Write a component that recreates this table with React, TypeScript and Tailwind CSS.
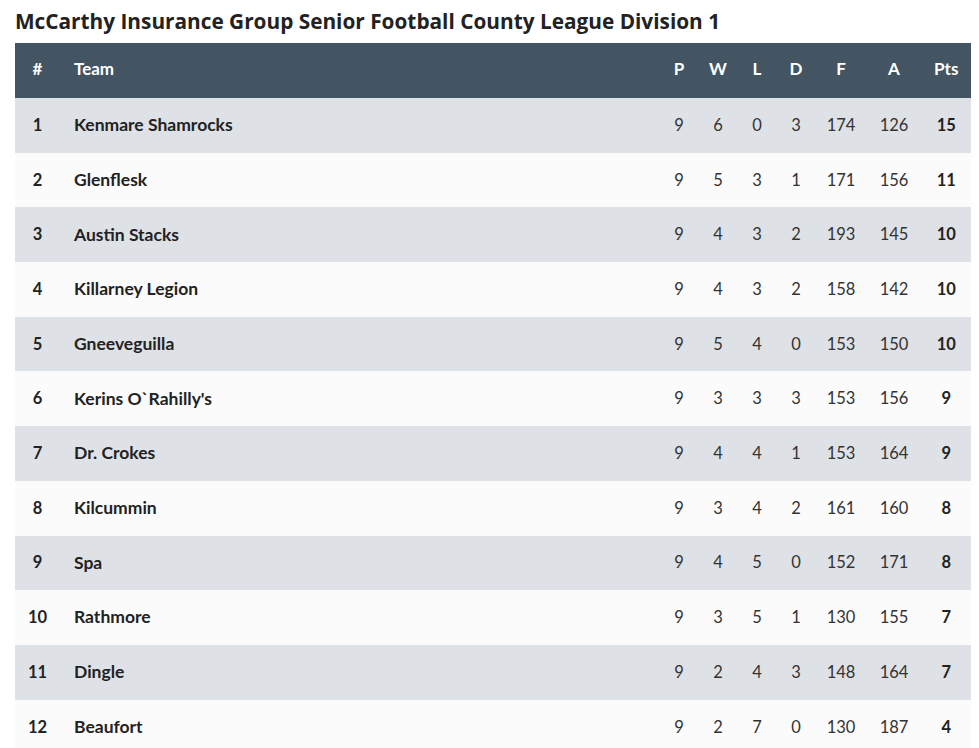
import React from "react";

const rows: [number, string, number, number, number, number, number, number, number][] = [
  [1, "Kenmare Shamrocks", 9, 6, 0, 3, 174, 126, 15],
  [2, "Glenflesk", 9, 5, 3, 1, 171, 156, 11],
  [3, "Austin Stacks", 9, 4, 3, 2, 193, 145, 10],
  [4, "Killarney Legion", 9, 4, 3, 2, 158, 142, 10],
  [5, "Gneeveguilla", 9, 5, 4, 0, 153, 150, 10],
  [6, "Kerins O`Rahilly's", 9, 3, 3, 3, 153, 156, 9],
  [7, "Dr. Crokes", 9, 4, 4, 1, 153, 164, 9],
  [8, "Kilcummin", 9, 3, 4, 2, 161, 160, 8],
  [9, "Spa", 9, 4, 5, 0, 152, 171, 8],
  [10, "Rathmore", 9, 3, 5, 1, 130, 155, 7],
  [11, "Dingle", 9, 2, 4, 3, 148, 164, 7],
  [12, "Beaufort", 9, 2, 7, 0, 130, 187, 4],
];

export default function App() {
  return (
    <div className="w-[979px] h-[748px] overflow-hidden bg-white text-[#222]" style={{ fontFamily: "Lato, 'Open Sans', sans-serif" }}>
      <div className="pl-[15px] pr-[8px]">
        <h1 className="h-[43px] flex items-center text-[20.8px] font-bold text-[#222]" style={{ fontFamily: "'Open Sans', sans-serif" }}>
          McCarthy Insurance Group Senior Football County League Division 1
        </h1>
        <div className="w-[956px]">
          <div className="flex h-[55px] items-center pb-[3px] bg-[#435563] text-white font-bold text-[17px]">
            <div className="w-[45px] text-center">#</div>
            <div className="w-[599.5px] pl-[14px]">Team</div>
            <div className="w-[39px] text-center">P</div>
            <div className="w-[39px] text-center">W</div>
            <div className="w-[39px] text-center">L</div>
            <div className="w-[39px] text-center">D</div>
            <div className="w-[51px] text-center">F</div>
            <div className="w-[55px] text-center">A</div>
            <div className="w-[49.5px] text-center">Pts</div>
          </div>
          {rows.map((r, i) => (
            <div key={r[0]} className={`flex h-[54.7px] items-center text-[16.5px] ${i % 2 === 0 ? "bg-[#dee1e6]" : "bg-[#fbfbfb]"}`}>
              <div className="w-[45px] text-center font-bold">{r[0]}</div>
              <div className="w-[599.5px] pl-[14px] font-bold text-[17.5px]">{r[1]}</div>
              <div className="w-[39px] text-center text-[#333]">{r[2]}</div>
              <div className="w-[39px] text-center text-[#333]">{r[3]}</div>
              <div className="w-[39px] text-center text-[#333]">{r[4]}</div>
              <div className="w-[39px] text-center text-[#333]">{r[5]}</div>
              <div className="w-[51px] text-center text-[#333]">{r[6]}</div>
              <div className="w-[55px] text-center text-[#333]">{r[7]}</div>
              <div className="w-[49.5px] text-center font-bold">{r[8]}</div>
            </div>
          ))}
        </div>
      </div>
    </div>
  );
}
